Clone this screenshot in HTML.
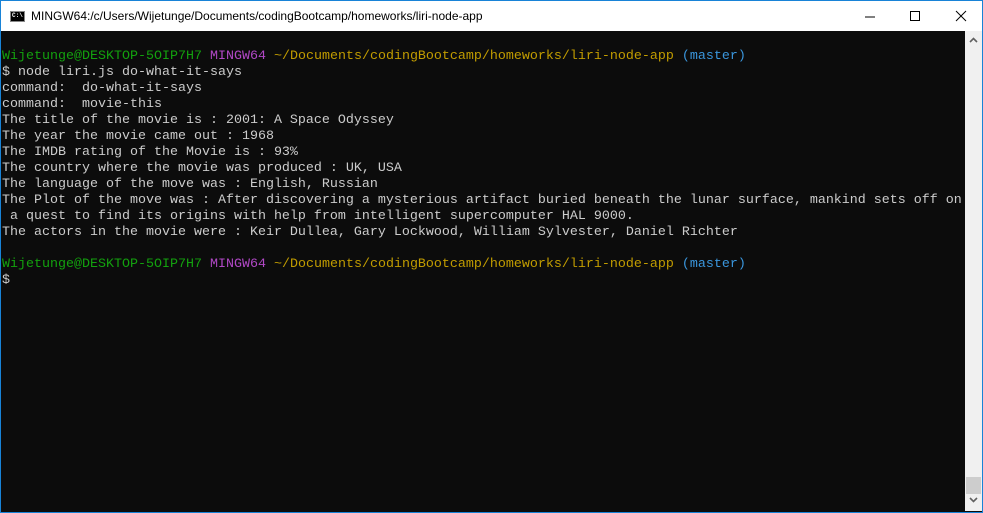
<!DOCTYPE html>
<html><head><style>
html,body{margin:0;padding:0;}
body{width:983px;height:512px;position:relative;overflow:hidden;background:#0c0c0c;font-family:"Liberation Sans",sans-serif;}
.win{position:absolute;left:0;top:0;width:981px;height:511px;border:1px solid #1883d7;}
.title{position:absolute;left:1px;top:1px;width:981px;height:30px;background:#fff;}
.title .t{position:absolute;left:30px;top:8px;font-size:12px;color:#000;}
.icon{position:absolute;left:9px;top:10px;width:15px;height:11px;background:#000;border:1px solid #888;box-sizing:border-box;}
.icon span{position:absolute;left:1px;top:0px;color:#fff;font:bold 6px "Liberation Mono",monospace;}
.term{position:absolute;left:1px;top:31px;width:964px;height:480px;background:#0c0c0c;}
pre{margin:0;position:absolute;left:1px;top:18px;font-family:"Liberation Mono",monospace;font-size:13.33px;line-height:16px;color:#cccccc;}
.g{color:#13a10e}.m{color:#b148c6}.y{color:#c19c00}.c{color:#3a96dd}
.sb{position:absolute;left:965px;top:31px;width:17px;height:480px;background:#f0f0f0;}
.thumb{position:absolute;left:966px;top:477px;width:15px;height:17px;background:#cdcdcd;}
</style></head><body>
<div class="title">
<div class="icon"><span>C:\</span></div>
<div class="t">MINGW64:/c/Users/Wijetunge/Documents/codingBootcamp/homeworks/liri-node-app</div>
<svg style="position:absolute;left:862px;top:8px" width="110" height="16">
<line x1="2" y1="8" x2="12" y2="8" stroke="#000" stroke-width="1"/>
<rect x="47.5" y="2.5" width="9" height="9" fill="none" stroke="#000"/>
<line x1="93" y1="2" x2="103" y2="12" stroke="#000"/>
<line x1="103" y1="2" x2="93" y2="12" stroke="#000"/>
</svg>
</div>
<div class="term">
<pre><span class="g">Wijetunge@DESKTOP-5OIP7H7</span> <span class="m">MINGW64</span> <span class="y">~/Documents/codingBootcamp/homeworks/liri-node-app</span> <span class="c">(master)</span>
$ node liri.js do-what-it-says
command:  do-what-it-says
command:  movie-this
The title of the movie is : 2001: A Space Odyssey
The year the movie came out : 1968
The IMDB rating of the Movie is : 93%
The country where the movie was produced : UK, USA
The language of the move was : English, Russian
The Plot of the move was : After discovering a mysterious artifact buried beneath the lunar surface, mankind sets off on
 a quest to find its origins with help from intelligent supercomputer HAL 9000.
The actors in the movie were : Keir Dullea, Gary Lockwood, William Sylvester, Daniel Richter

<span class="g">Wijetunge@DESKTOP-5OIP7H7</span> <span class="m">MINGW64</span> <span class="y">~/Documents/codingBootcamp/homeworks/liri-node-app</span> <span class="c">(master)</span>
$</pre>
</div>
<div class="sb">
<svg style="position:absolute;left:4px;top:6px" width="9" height="6"><polyline points="1,5 4.5,1.5 8,5" fill="none" stroke="#606060" stroke-width="1.6"/></svg>
<svg style="position:absolute;left:4px;top:466px" width="9" height="6"><polyline points="1,1 4.5,4.5 8,1" fill="none" stroke="#606060" stroke-width="1.6"/></svg>
</div>
<div class="thumb"></div>
<div class="win"></div>
</body></html>
